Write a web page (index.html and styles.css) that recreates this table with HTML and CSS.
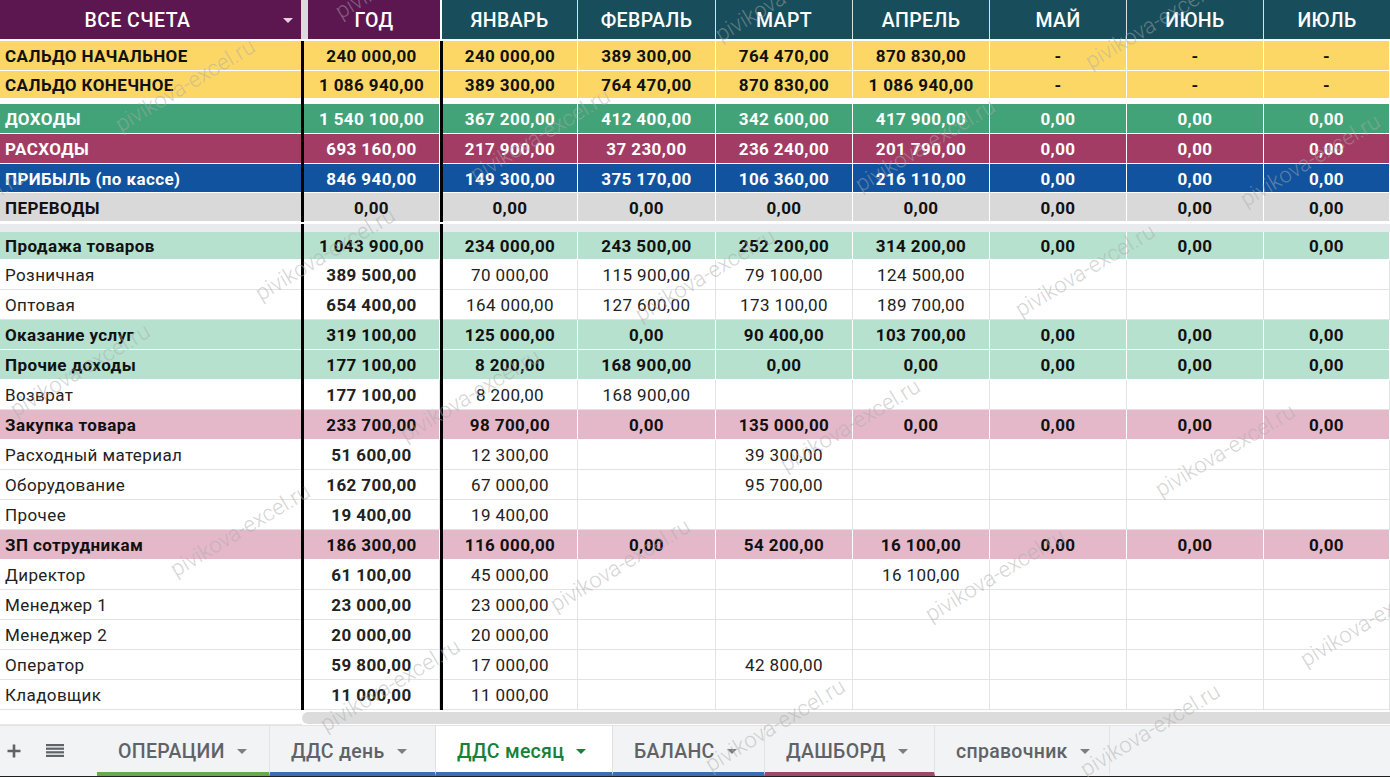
FILE: index.html
```html
<!DOCTYPE html>
<html lang="ru">
<head>
<meta charset="utf-8">
<title>ДДС месяц</title>
<link rel="stylesheet" href="styles.css">
</head>
<body>
<div class="page">
  <div class="sheet">
    <div class="hdr">
      <div class="h-acc">ВСЕ СЧЕТА<span class="caret"></span></div>
      <div class="h-strip"></div>
      <div class="h-year">ГОД</div>
      <div class="h-white"></div>
      <div class="h-m">ЯНВАРЬ</div>
      <div class="h-m">ФЕВРАЛЬ</div>
      <div class="h-m">МАРТ</div>
      <div class="h-m">АПРЕЛЬ</div>
      <div class="h-m">МАЙ</div>
      <div class="h-m">ИЮНЬ</div>
      <div class="h-m last">ИЮЛЬ</div>
    </div>

    <div class="row yellow h30 b">
      <div class="lbl">САЛЬДО НАЧАЛЬНОЕ</div><div class="bl"></div>
      <div class="c">240 000,00</div><div class="bl"></div>
      <div class="c">240 000,00</div><div class="c">389 300,00</div><div class="c">764 470,00</div><div class="c">870 830,00</div><div class="c">-</div><div class="c">-</div><div class="c">-</div>
    </div>
    <div class="row yellow h28 b">
      <div class="lbl">САЛЬДО КОНЕЧНОЕ</div><div class="bl"></div>
      <div class="c">1 086 940,00</div><div class="bl"></div>
      <div class="c">389 300,00</div><div class="c">764 470,00</div><div class="c">870 830,00</div><div class="c">1 086 940,00</div><div class="c">-</div><div class="c">-</div><div class="c">-</div>
    </div>
    <div class="gap gap-white"><div></div><div class="bl"></div><div></div><div class="bl"></div></div>

    <div class="row green h30 b">
      <div class="lbl">ДОХОДЫ</div><div class="bl"></div>
      <div class="c">1 540 100,00</div><div class="bl"></div>
      <div class="c">367 200,00</div><div class="c">412 400,00</div><div class="c">342 600,00</div><div class="c">417 900,00</div><div class="c">0,00</div><div class="c">0,00</div><div class="c">0,00</div>
    </div>
    <div class="row rasp h30 b">
      <div class="lbl">РАСХОДЫ</div><div class="bl"></div>
      <div class="c">693 160,00</div><div class="bl"></div>
      <div class="c">217 900,00</div><div class="c">37 230,00</div><div class="c">236 240,00</div><div class="c">201 790,00</div><div class="c">0,00</div><div class="c">0,00</div><div class="c">0,00</div>
    </div>
    <div class="row blue h29 b">
      <div class="lbl">ПРИБЫЛЬ (по кассе)</div><div class="bl"></div>
      <div class="c">846 940,00</div><div class="bl"></div>
      <div class="c">149 300,00</div><div class="c">375 170,00</div><div class="c">106 360,00</div><div class="c">216 110,00</div><div class="c">0,00</div><div class="c">0,00</div><div class="c">0,00</div>
    </div>
    <div class="row grey h29 b">
      <div class="lbl">ПЕРЕВОДЫ</div><div class="bl"></div>
      <div class="c">0,00</div><div class="bl"></div>
      <div class="c">0,00</div><div class="c">0,00</div><div class="c">0,00</div><div class="c">0,00</div><div class="c">0,00</div><div class="c">0,00</div><div class="c">0,00</div>
    </div>
    <div class="gap gap-grey"><div></div><div class="bl"></div><div></div><div class="bl"></div></div>

    <div class="row mint h28 b">
      <div class="lbl">Продажа товаров</div><div class="bl"></div>
      <div class="c">1 043 900,00</div><div class="bl"></div>
      <div class="c">234 000,00</div><div class="c">243 500,00</div><div class="c">252 200,00</div><div class="c">314 200,00</div><div class="c">0,00</div><div class="c">0,00</div><div class="c">0,00</div>
    </div>
    <div class="row plain h30">
      <div class="lbl">Розничная</div><div class="bl"></div>
      <div class="c yb">389 500,00</div><div class="bl"></div>
      <div class="c">70 000,00</div><div class="c">115 900,00</div><div class="c">79 100,00</div><div class="c">124 500,00</div><div class="c"></div><div class="c"></div><div class="c"></div>
    </div>
    <div class="row plain h30">
      <div class="lbl">Оптовая</div><div class="bl"></div>
      <div class="c yb">654 400,00</div><div class="bl"></div>
      <div class="c">164 000,00</div><div class="c">127 600,00</div><div class="c">173 100,00</div><div class="c">189 700,00</div><div class="c"></div><div class="c"></div><div class="c"></div>
    </div>
    <div class="row mint h30 b">
      <div class="lbl">Оказание услуг</div><div class="bl"></div>
      <div class="c">319 100,00</div><div class="bl"></div>
      <div class="c">125 000,00</div><div class="c">0,00</div><div class="c">90 400,00</div><div class="c">103 700,00</div><div class="c">0,00</div><div class="c">0,00</div><div class="c">0,00</div>
    </div>
    <div class="row mint h30 b">
      <div class="lbl">Прочие доходы</div><div class="bl"></div>
      <div class="c">177 100,00</div><div class="bl"></div>
      <div class="c">8 200,00</div><div class="c">168 900,00</div><div class="c">0,00</div><div class="c">0,00</div><div class="c">0,00</div><div class="c">0,00</div><div class="c">0,00</div>
    </div>
    <div class="row plain h30">
      <div class="lbl">Возврат</div><div class="bl"></div>
      <div class="c yb">177 100,00</div><div class="bl"></div>
      <div class="c">8 200,00</div><div class="c">168 900,00</div><div class="c"></div><div class="c"></div><div class="c"></div><div class="c"></div><div class="c"></div>
    </div>
    <div class="row pink h30 b">
      <div class="lbl">Закупка товара</div><div class="bl"></div>
      <div class="c">233 700,00</div><div class="bl"></div>
      <div class="c">98 700,00</div><div class="c">0,00</div><div class="c">135 000,00</div><div class="c">0,00</div><div class="c">0,00</div><div class="c">0,00</div><div class="c">0,00</div>
    </div>
    <div class="row plain h30">
      <div class="lbl">Расходный материал</div><div class="bl"></div>
      <div class="c yb">51 600,00</div><div class="bl"></div>
      <div class="c">12 300,00</div><div class="c"></div><div class="c">39 300,00</div><div class="c"></div><div class="c"></div><div class="c"></div><div class="c"></div>
    </div>
    <div class="row plain h30">
      <div class="lbl">Оборудование</div><div class="bl"></div>
      <div class="c yb">162 700,00</div><div class="bl"></div>
      <div class="c">67 000,00</div><div class="c"></div><div class="c">95 700,00</div><div class="c"></div><div class="c"></div><div class="c"></div><div class="c"></div>
    </div>
    <div class="row plain h30">
      <div class="lbl">Прочее</div><div class="bl"></div>
      <div class="c yb">19 400,00</div><div class="bl"></div>
      <div class="c">19 400,00</div><div class="c"></div><div class="c"></div><div class="c"></div><div class="c"></div><div class="c"></div><div class="c"></div>
    </div>
    <div class="row pink h30 b">
      <div class="lbl">ЗП сотрудникам</div><div class="bl"></div>
      <div class="c">186 300,00</div><div class="bl"></div>
      <div class="c">116 000,00</div><div class="c">0,00</div><div class="c">54 200,00</div><div class="c">16 100,00</div><div class="c">0,00</div><div class="c">0,00</div><div class="c">0,00</div>
    </div>
    <div class="row plain h30">
      <div class="lbl">Директор</div><div class="bl"></div>
      <div class="c yb">61 100,00</div><div class="bl"></div>
      <div class="c">45 000,00</div><div class="c"></div><div class="c"></div><div class="c">16 100,00</div><div class="c"></div><div class="c"></div><div class="c"></div>
    </div>
    <div class="row plain h30">
      <div class="lbl">Менеджер 1</div><div class="bl"></div>
      <div class="c yb">23 000,00</div><div class="bl"></div>
      <div class="c">23 000,00</div><div class="c"></div><div class="c"></div><div class="c"></div><div class="c"></div><div class="c"></div><div class="c"></div>
    </div>
    <div class="row plain h30">
      <div class="lbl">Менеджер 2</div><div class="bl"></div>
      <div class="c yb">20 000,00</div><div class="bl"></div>
      <div class="c">20 000,00</div><div class="c"></div><div class="c"></div><div class="c"></div><div class="c"></div><div class="c"></div><div class="c"></div>
    </div>
    <div class="row plain h30">
      <div class="lbl">Оператор</div><div class="bl"></div>
      <div class="c yb">59 800,00</div><div class="bl"></div>
      <div class="c">17 000,00</div><div class="c"></div><div class="c">42 800,00</div><div class="c"></div><div class="c"></div><div class="c"></div><div class="c"></div>
    </div>
    <div class="row plain h30">
      <div class="lbl">Кладовщик</div><div class="bl"></div>
      <div class="c yb">11 000,00</div><div class="bl"></div>
      <div class="c">11 000,00</div><div class="c"></div><div class="c"></div><div class="c"></div><div class="c"></div><div class="c"></div><div class="c"></div>
    </div>

    <div class="scroll"><div class="scroll-left"></div><div class="scroll-track"></div></div>
  </div>

  <div class="tabs">
    <div class="tab-icon">
      <svg width="16" height="16" viewBox="0 0 16 16"><path d="M8 1.5v13M1.5 8h13" stroke="#5f6368" stroke-width="2.6" fill="none"/></svg>
    </div>
    <div class="tab-icon">
      <svg width="18" height="16" viewBox="0 0 18 16"><rect x="0" y="1" width="18" height="2.2" fill="#5f6368"/><rect x="0" y="4.6" width="18" height="2.2" fill="#5f6368"/><rect x="0" y="8.2" width="18" height="2.2" fill="#5f6368"/><rect x="0" y="11.8" width="18" height="2.2" fill="#5f6368"/></svg>
    </div>
    <div class="tab t1 u-green">ОПЕРАЦИИ<span class="tcaret"></span></div>
    <div class="tab t2 u-blue">ДДС день<span class="tcaret"></span></div>
    <div class="tab t3 u-blue active">ДДС месяц<span class="tcaret"></span></div>
    <div class="tab t4 u-blue">БАЛАНС<span class="tcaret"></span></div>
    <div class="tab t5 u-maroon">ДАШБОРД<span class="tcaret"></span></div>
    <div class="tab t6">справочник<span class="tcaret"></span></div>
  </div>

  <div class="wm">
    <span class="w w1">pivikova-excel.ru</span>
    <span class="w w2">pivikova-excel.ru</span>
    <span class="w w3">pivikova-excel.ru</span>
    <span class="w w4">pivikova-excel.ru</span>
    <span class="w w5">pivikova-excel.ru</span>
    <span class="w w6">pivikova-excel.ru</span>
    <span class="w w7">pivikova-excel.ru</span>
    <span class="w w8">pivikova-excel.ru</span>
    <span class="w w9">pivikova-excel.ru</span>
    <span class="w w10">pivikova-excel.ru</span>
    <span class="w w11">pivikova-excel.ru</span>
    <span class="w w12">pivikova-excel.ru</span>
    <span class="w w13">pivikova-excel.ru</span>
    <span class="w w14">pivikova-excel.ru</span>
    <span class="w w15">pivikova-excel.ru</span>
    <span class="w w16">pivikova-excel.ru</span>
    <span class="w w17">pivikova-excel.ru</span>
    <span class="w w18">pivikova-excel.ru</span>
    <span class="w w19">pivikova-excel.ru</span>
    <span class="w w20">pivikova-excel.ru</span>
    <span class="w w21">pivikova-excel.ru</span>
    <span class="w w23">pivikova-excel.ru</span>
  </div>
</div>
</body>
</html>
```
FILE: styles.css
```css
* { box-sizing: border-box; }
html, body { margin: 0; padding: 0; }
body {
  width: 1390px;
  height: 777px;
  overflow: hidden;
  font-family: Roboto, "Liberation Sans", Arial, sans-serif;
  background: #fff;
  color: #111;
}
.page {
  position: relative;
  width: 1390px;
  height: 777px;
  display: flex;
  flex-direction: column;
}
.sheet { display: flex; flex-direction: column; }

/* header */
.hdr {
  display: grid;
  grid-template-columns: 301px 7px 132px 2px 136px 138px 137px 137px 137px 137px 126px;
  height: 39px;
  margin-bottom: 2px;
  color: #fff;
  font-size: 19.5px;
  letter-spacing: 0.4px;
  font-weight: 500;
}
.hdr > div { display: flex; align-items: center; justify-content: center; padding-top: 1px; }
.h-acc { background: #5c1751; position: relative; padding-right: 26px; }
.h-year { background: #5c1751; }
.h-strip { background: #d9dcdf; }
.h-white { background: #fff; }
.h-m { background: #184e5b; border-right: 1px solid #d8e2e4; }
.h-m.last { border-right: 0; }
.caret {
  position: absolute;
  right: 8px;
  top: 18px;
  width: 0; height: 0;
  border-left: 5px solid transparent;
  border-right: 5px solid transparent;
  border-top: 5px solid #e8cfe2;
}

/* data rows */
.row, .gap {
  display: grid;
  grid-template-columns: 301px 3px 136px 3px 135px 138px 137px 137px 137px 137px 126px;
}
.h30 { height: 30px; }
.h29 { height: 29px; }
.h28 { height: 28px; }
.row > div {
  display: flex;
  align-items: center;
  border-right: 1px solid #fff;
  border-bottom: 1px solid #fff;
  font-size: 17px;
  letter-spacing: 0.4px;
  white-space: nowrap;
  padding-top: 1px;
}
.row > .c { justify-content: center; }
.row > .lbl { padding-left: 5px; border-right: 0; }
.row > .bl { background: #000; border: 0; }
.row.b > div { font-weight: 700; }
.row > .yb { font-weight: 700; }

.yellow { background: #fdd766; color: #111; }
.green { background: #43a378; color: #fff; }
.rasp { background: #a23c64; color: #fff; }
.blue { background: #11539f; color: #fff; }
.grey { background: #d9d9d9; color: #111; }
.mint { background: #b5e1ce; color: #111; }
.pink { background: #e5b8c9; color: #111; }
.plain { background: #fff; color: #222; }
.plain > div { border-right-color: #e2e3e3; border-bottom-color: #e2e3e3; }
.plain > .lbl { font-weight: 400; }

.gap > .bl { background: #000; }
.gap-white { height: 5px; background: #fff; }
.gap-grey { height: 10px; background: #e8eaed; border-top: 2px solid #fff; }

/* scrollbar strip */
.scroll { display: flex; height: 15px; }
.scroll-left { width: 302px; background: #fff; border-bottom: 1px solid #e6e6e6; }
.scroll-track {
  flex: 1;
  margin: 2px 0 1px 0;
  background: #dcdcdc;
  border-radius: 6px 0 0 6px;
}

/* tabs */
.tabs {
  flex: 1;
  display: flex;
  align-items: stretch;
  background: #f1f3f4;
  border-top: 1px solid #e3e3e3;
  border-bottom: 1px solid #1f1f1f;
}
.tab-icon {
  display: flex;
  align-items: center;
}
.tab-icon:first-child { width: 26px; padding-left: 6px; }
.tab-icon:nth-child(2) { width: 71px; padding-left: 20px; }
.tab {
  display: flex;
  align-items: center;
  padding-left: 21px;
  font-size: 19.5px;
  letter-spacing: 0.3px;
  font-weight: 500;
  color: #5f6368;
  border-right: 1px solid #e2e2e2;
  border-bottom: 4px solid transparent;
  padding-top: 4px;
}
.tcaret {
  margin-left: 12px;
  width: 0; height: 0;
  border-left: 5px solid transparent;
  border-right: 5px solid transparent;
  border-top: 5px solid #7a7f84;
}
.t1 { width: 173px; }
.t2 { width: 166px; }
.t3 { width: 177px; }
.t4 { width: 152px; }
.t5 { width: 170px; }
.t6 { width: 175px; }
.u-green { border-bottom-color: #6aa84f; }
.u-blue { border-bottom-color: #3f6db5; }
.u-maroon { border-bottom-color: #9c4a6b; }
.tab.active { background: #fff; color: #188038; }
.tab.active .tcaret { border-top-color: #188038; }

/* watermark overlay */
.wm {
  position: absolute;
  inset: 0;
  pointer-events: none;
  overflow: hidden;
}
.w {
  position: absolute;
  font-family: Roboto, "Liberation Sans", sans-serif;
  font-size: 22px;
  font-weight: 300;
  color: rgba(170, 170, 170, 0.5);
  white-space: nowrap;
  transform: translate(-50%, -50%) rotate(-31deg);
}
.w1 { left: 785px; top: -5px; }
.w2 { left: 1155px; top: 22px; }
.w3 { left: 540px; top: 135px; }
.w4 { left: 925px; top: 145px; }
.w5 { left: 1310px; top: 160px; }
.w6 { left: 185px; top: 85px; }
.w7 { left: 325px; top: 254px; }
.w8 { left: 705px; top: 275px; }
.w9 { left: 1085px; top: 270px; }
.w10 { left: 80px; top: 370px; }
.w11 { left: 470px; top: 395px; }
.w12 { left: 850px; top: 425px; }
.w13 { left: 1225px; top: 450px; }
.w14 { left: 240px; top: 530px; }
.w15 { left: 620px; top: 565px; }
.w16 { left: 995px; top: 575px; }
.w17 { left: 1370px; top: 620px; }
.w18 { left: 390px; top: 685px; }
.w19 { left: 775px; top: 725px; }
.w20 { left: 1150px; top: 730px; }
.w21 { left: -45px; top: 215px; }
.w23 { left: 405px; top: -28px; }
```
